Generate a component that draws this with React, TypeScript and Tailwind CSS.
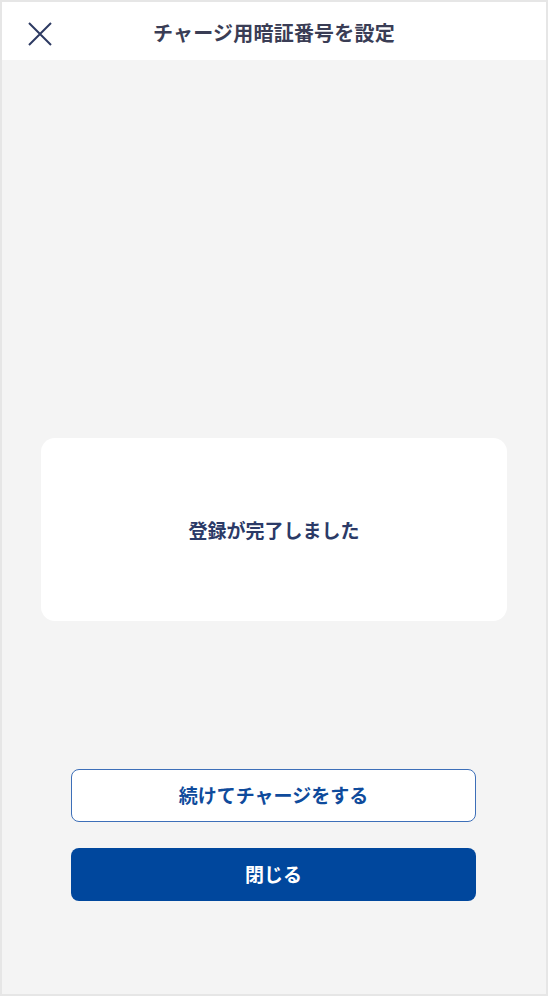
import React from "react";

export default function App() {
  return (
    <div
      className="w-[548px] h-[996px] border-2 border-[#e6e6e6] bg-[#f4f4f4] flex flex-col"
      style={{ fontFamily: '"Noto Sans CJK JP", "Noto Sans", sans-serif' }}
    >
      <header className="relative h-[58px] bg-white flex items-center justify-center shrink-0 pt-[3px]">
        <button className="absolute left-[26px] top-[20px] w-[24px] h-[24px]">
          <svg width="24" height="24" viewBox="0 0 24 24">
            <path d="M1 1 L23 23 M23 1 L1 23" stroke="#2d3a62" strokeWidth="2" fill="none" />
          </svg>
        </button>
        <h1 className="text-[20px] font-bold text-[#3a3d55] leading-none tracking-[0.2px]">
          チャージ用暗証番号を設定
        </h1>
      </header>
      <main className="flex-1 flex flex-col items-center pt-[378px]">
        <div className="w-[466px] h-[183px] bg-white rounded-[14px] flex items-center justify-center">
          <p className="text-[19px] font-bold text-[#2b3a67] leading-none">登録が完了しました</p>
        </div>
        <div className="mt-[148px] flex flex-col gap-[26px] mr-[1px]">
          <button className="w-[405px] h-[53px] rounded-[8px] border border-[#3d6fb8] bg-white text-[19px] font-bold text-[#0f4b9c] flex items-center justify-center">
            続けてチャージをする
          </button>
          <button className="w-[405px] h-[53px] rounded-[8px] bg-[#00479d] text-[19px] font-bold text-white flex items-center justify-center">
            閉じる
          </button>
        </div>
      </main>
    </div>
  );
}
